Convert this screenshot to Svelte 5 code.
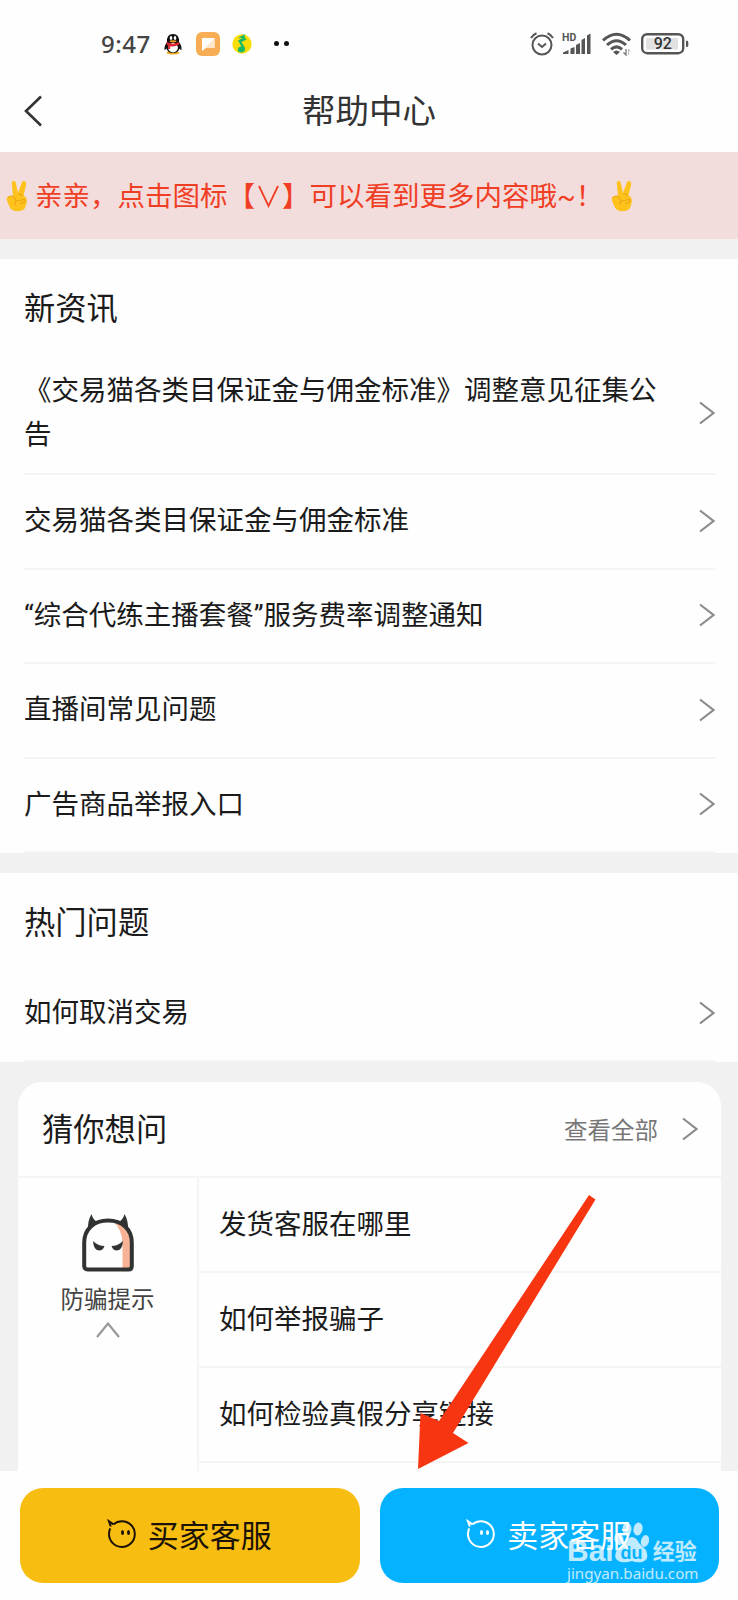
<script>
    const noticias = [
        "《交易猫各类目保证金与佣金标准》调整意见征集公告",
        "交易猫各类目保证金与佣金标准",
        "“综合代练主播套餐”服务费率调整通知",
        "直播间常见问题",
        "广告商品举报入口"
    ]
    const populares = ["如何取消交易"]
    const sugerencias = ["发货客服在哪里", "如何举报骗子", "如何检验真假分享链接", ""]
    const secciones = [
        { titulo: "新资讯", filas: noticias },
        { titulo: "热门问题", filas: populares }
    ]
</script>

{#snippet flecha()}
    <svg class="flecha" width="16" height="24" viewBox="0 0 16 24">
        <path d="M1 1.500L14.500 12L1 22.500" fill="none" stroke="#8b8b8b" stroke-width="2.200" />
    </svg>
{/snippet}

{#snippet mano()}
    <svg class="mano" width="23" height="32" viewBox="0 0 23 32">
        <path d="M7 16L5.800 3.500Q5.600.8 7.600.7Q9.400.7 9.800 3L12 13L15.800 2.500Q16.900.5 18.800 1.300Q20.700 2.200 20.200 4.400L17.500 15.500Q21 17 20.800 21Q20.500 31 12.500 31.300Q5 31.500 3.200 26L.8 20Q0 17.500 2 16.500Q4.500 15.200 7 16Z" fill="#fdc21b" />
        <path d="M2 18Q5 14.500 7.500 17L10 20.500M9 25Q8 20.500 13 20.500L18 19.500Q20 20 18.500 22Q16 23.500 14 23.500M12.500 13.500L17 15.500" fill="none" stroke="#eba51a" stroke-width="1.100" />
    </svg>
{/snippet}

{#snippet carita()}
    <svg width="29" height="30" viewBox="0 0 29 30">
        <path d="M6.500 5.300Q10 2.200 15 2.200A12.900 12.900 0 1 1 2 15Q2 12 3.200 9.300M3.800 7.500L1.900 2.200L6.500 5.300" fill="none" stroke="currentColor" stroke-width="2" />
        <ellipse cx="15.500" cy="13.500" rx="1.500" ry="2.500" fill="currentColor" />
        <ellipse cx="21.500" cy="13.500" rx="1.500" ry="2.500" fill="currentColor" />
    </svg>
{/snippet}

<main>
    <div class="estado">
        <span class="hora">9:47</span>
        <svg class="qq" width="18" height="22" viewBox="0 0 18 22">
            <ellipse cx="9" cy="19.800" rx="6.500" ry="1.800" fill="#efaa28" />
            <path d="M3 9Q2.500 1 9 1Q15.500 1 15 9Q18 13 17.500 16.500Q16.500 17.500 15.500 15.500Q14 20 9 20Q4 20 2.500 15.500Q1 17.500.5 16.500Q0 13 3 9Z" fill="#111" />
            <ellipse cx="9" cy="14.800" rx="4.900" ry="4.700" fill="#fff" />
            <path d="M3 9Q9 12.500 15 9L15.500 11.500Q9 14.500 6.500 13L6 16H4L4.300 12.500L2.500 11.500Z" fill="#df2530" />
            <ellipse cx="7" cy="5" rx="1.300" ry="1.900" fill="#fff" />
            <ellipse cx="11" cy="5" rx="1.300" ry="1.900" fill="#fff" />
            <ellipse cx="9" cy="8.300" rx="3.500" ry="1.100" fill="#eea020" />
        </svg>
        <svg class="mensaje" width="24" height="24" viewBox="0 0 24 24">
            <rect width="24" height="24" rx="6" fill="#f8ad55" />
            <path d="M6 6H18.500V16H10L6 19Z" fill="#fff" />
            <path d="M18.500 6V16H10L7 18Z" fill="#ffe8ca" />
        </svg>
        <svg class="musica" width="20" height="20" viewBox="0 0 20 20">
            <circle cx="10" cy="10" r="9.700" fill="#f9dc08" />
            <path d="M6 3.800L13 0Q11.500 3 14.500 5.500L9.500 8L12.800 13.500Q14 18 9.500 18.500Q5.500 18.500 5.800 15Q6.500 12 9.500 12.500L6 6.500L10.500 4Z" fill="#19b967" />
        </svg>
        <span class="puntos"><i></i><i></i></span>

        <svg class="alarma" width="24" height="24" viewBox="0 0 24 24">
            <g fill="none" stroke="#555" stroke-width="2">
                <circle cx="12" cy="13" r="9.500" />
                <path d="M1 6Q3 2.500 6.500 1.200M23 6Q21 2.500 17.500 1.200M8 11.500L12 15L16 11.500" />
            </g>
        </svg>
        <svg class="senal" width="30" height="24" viewBox="0 0 30 24">
            <text x="0" y="8.500" class="hd">HD</text>
            <path d="M1 20.500L6.500 18V22H1ZM8.500 16.500L12.500 15V22H8.500ZM14 13L18 11V22H14ZM19.500 8L23 6V22H19.500ZM25 3.500L28.500 1.500V22H25Z" fill="#555" />
        </svg>
        <svg class="wifi" width="29" height="24" viewBox="0 0 29 24">
            <g fill="none" stroke="#555" stroke-width="3">
                <path d="M1 8.500Q14.500-4 28 8.500M5 13Q14.500 4.500 24 13M9 17.300Q14.500 12.500 20 17.300" />
            </g>
            <path d="M11 20Q14.500 17 18 20L14.500 23Z" fill="#555" />
            <path d="M24 17V23L21.500 20.500" fill="none" stroke="#777" stroke-width="1.300" />
            <path d="M26.500 23V17L28.500 19.500" fill="none" stroke="#bbb" stroke-width="1" />
        </svg>
        <svg class="bateria" width="48" height="22" viewBox="0 0 48 22">
            <rect x="1.200" y="1.200" width="41" height="19" rx="5" fill="#fff" stroke="#555" stroke-width="2.400" />
            <rect x="5" y="5" width="32" height="11.500" rx="1.500" fill="#e2e2e2" />
            <path d="M45 7.500Q47.300 7.500 47.300 9V12.500Q47.300 14 45 14Z" fill="#555" />
            <text x="21.800" y="16.300" text-anchor="middle" class="carga">92</text>
        </svg>
    </div>

    <header>
        <svg width="20" height="32" viewBox="0 0 20 32">
            <path d="M17 1.500L2 16L17 30.500" fill="none" stroke="#333" stroke-width="2.600" />
        </svg>
        <h1>帮助中心</h1>
    </header>

    <div class="aviso">
        {@render mano()}
        <span>亲亲，点击图标【<svg class="ve" width="27" height="24" viewBox="0 0 27 24"><path d="M4 2L13.500 22L23 2" fill="none" stroke="#f03e25" stroke-width="1.800" /></svg>】可以看到更多内容哦~！</span>
        {@render mano()}
    </div>

    <div class="contenido">
        {#each secciones as seccion}
            <section>
                <h2>{seccion.titulo}</h2>
                <ul>
                    {#each seccion.filas as fila}
                        <li>
                            <span>{fila}</span>
                            {@render flecha()}
                        </li>
                    {/each}
                </ul>
            </section>
        {/each}

        <div class="tarjeta">
            <div class="cabecera">
                <h2>猜你想问</h2>
                <a href="#todo">查看全部 {@render flecha()}</a>
            </div>
            <div class="cuerpo">
                <div class="categoria">
                    <svg width="52" height="59" viewBox="0 0 52 59">
                        <path d="M31 7Q48 12 48 29V54H40.500V30Q40.500 16 31 7Z" fill="#f8b396" />
                        <path d="M2.200 52V29C2.200 15 12 6.500 26 6.500S49.800 15 49.800 29V52Q49.800 55.500 46.300 55.500H5.700Q2.200 55.500 2.200 52Z" fill="none" stroke="#303332" stroke-width="4" />
                        <path d="M6 16Q5.500 7 9.500 0Q11 6 15.500 8ZM46 16Q46.500 7 42.500 0Q41 6 36.500 8Z" fill="#303332" />
                        <path d="M11 27Q16 32 22.500 32Q21 36.500 17 36.500Q11.500 36 11 27ZM41 27Q36 32 29.500 32Q31 36.500 35 36.500Q40.500 36 41 27Z" fill="#303332" />
                    </svg>
                    <span>防骗提示</span>
                    <svg width="24" height="16" viewBox="0 0 24 16">
                        <path d="M1 15L12 1.500L23 15" fill="none" stroke="#999" stroke-width="2.200" />
                    </svg>
                </div>
                <ul class="preguntas">
                    {#each sugerencias as pregunta}
                        <li>{pregunta}</li>
                    {/each}
                </ul>
            </div>
        </div>
    </div>

    <footer>
        <button class="comprador">{@render carita()}买家客服</button>
        <button class="vendedor">{@render carita()}卖家客服</button>
    </footer>

    <!-- indicador rojo sobre la lista -->
    <svg class="indicador" width="180" height="276" viewBox="0 0 180 276">
        <path d="M171 0L177.500 4.500L35 238L50.500 248L0 274L2.500 218L21 226Z" fill="#f73611" />
    </svg>

    <div class="marca">
        <div class="logo">
            <b>Bai</b>
            <svg width="35" height="42" viewBox="0 0 35 42">
                <g fill="#fff">
                    <ellipse cx="5" cy="18" rx="4.500" ry="6" transform="rotate(-15 5 18)" />
                    <ellipse cx="13" cy="8" rx="4.500" ry="6.500" />
                    <ellipse cx="24" cy="8" rx="4.500" ry="6.500" transform="rotate(12 24 8)" />
                    <ellipse cx="31" cy="20" rx="4" ry="6" transform="rotate(15 31 20)" />
                    <path d="M18 16Q22 16 25 22L32 29Q36 39 28 41Q23 42 18 40Q12 42 7 41Q-2 38 3 29L11 22Q14 16 18 16Z" />
                </g>
                <text x="17.500" y="38" text-anchor="middle" class="du">du</text>
            </svg>
            <b class="zh">经验</b>
        </div>
        <span class="web">jingyan.baidu.com</span>
    </div>
</main>

<style>
    :global(body) {
        margin: 0;
    }

    main {
        position: relative;
        display: flex;
        flex-direction: column;
        width: 738px;
        height: 1600px;
        overflow: hidden;
        background: #fefefe;
        color: #1b1b1b;
        font-family: Roboto, "Noto Sans CJK SC", sans-serif;
    }

    svg {
        display: block;
        flex: none;
    }

    h1, h2, ul {
        margin: 0;
        padding: 0;
        font-weight: 400;
        list-style: none;
    }

    .estado {
        display: flex;
        align-items: center;
        box-sizing: border-box;
        height: 74px;
        padding: 13px 49px 0 101px;
    }

    .hora {
        width: 63px;
        font: 500 24px "Noto Sans", sans-serif;
        letter-spacing: .5px;
        color: #444;
    }

    .qq { margin-right: 14px; }
    .mensaje { margin-right: 12px; }
    .musica { margin-right: 22px; }

    .puntos {
        display: flex;
        gap: 5px;
        margin-right: auto;
    }

    .puntos i {
        width: 5px;
        height: 5px;
        border-radius: 50%;
        background: #111;
    }

    .alarma { margin-right: 8px; }
    .senal { margin-right: 10px; }
    .wifi { margin-right: 10px; }

    .hd {
        font: 700 10.500px Roboto, sans-serif;
        fill: #555;
    }

    .carga {
        font: 500 16px Roboto, sans-serif;
        fill: #333;
    }

    header {
        display: flex;
        align-items: center;
        box-sizing: border-box;
        height: 78px;
        padding: 0 24px 4px;
    }

    h1 {
        flex: 1;
        margin-right: 20px;
        padding-top: 2px;
        text-align: center;
        font-size: 33.500px;
        line-height: 48px;
        color: #333;
    }

    .aviso {
        display: flex;
        align-items: center;
        height: 87px;
        padding-left: 6px;
        background: #f3dddc;
        color: #f03e25;
        font-size: 27.500px;
        white-space: nowrap;
    }

    .aviso span {
        margin: 0 8px 0 6px;
        padding-bottom: 3px;
    }

    .ve {
        display: inline-block;
        vertical-align: -2px;
    }

    .contenido {
        flex: 1;
        min-height: 0;
        overflow: hidden;
        background: #f1f1f1;
    }

    section {
        margin-top: 20px;
        padding: 0 23px 0 24px;
        background: #fefefe;
    }

    h2 {
        font-size: 31.300px;
        line-height: 46px;
    }

    section h2 {
        padding: 28px 0 20px;
    }

    section li {
        display: flex;
        align-items: center;
        justify-content: space-between;
        box-sizing: border-box;
        min-height: 94.500px;
        padding: 16px 0 17px;
        border-bottom: 2px solid #f5f5f5;
        font-size: 27.500px;
        line-height: 43.500px;
    }

    section li span {
        width: 640px;
    }

    .tarjeta {
        margin: 20px 17px 0 18px;
        border-radius: 24px 24px 0 0;
        background: #fefefe;
    }

    .cabecera {
        display: flex;
        align-items: center;
        justify-content: space-between;
        box-sizing: border-box;
        height: 96px;
        padding: 0 23px 0 24px;
        border-bottom: 2px solid #f5f5f5;
    }

    .cabecera h2 {
        padding-top: 4px;
    }

    .cabecera a {
        display: flex;
        align-items: center;
        gap: 24px;
        color: #777;
        font-size: 23.500px;
        text-decoration: none;
    }

    .cuerpo {
        display: flex;
    }

    .categoria {
        display: flex;
        flex-direction: column;
        align-items: center;
        box-sizing: border-box;
        width: 181px;
        padding-top: 36px;
        border-right: 2px solid #f5f5f5;
        font-size: 23.500px;
        line-height: 34px;
        color: #444;
    }

    .categoria span {
        margin: 10px 0 5px;
    }

    .preguntas {
        flex: 1;
    }

    .preguntas li {
        box-sizing: border-box;
        height: 95.200px;
        padding-left: 20px;
        border-bottom: 2px solid #f5f5f5;
        font-size: 27.500px;
        line-height: 94px;
    }

    footer {
        display: flex;
        gap: 20px;
        box-sizing: border-box;
        height: 129px;
        padding: 17px 19px 17px 20px;
        background: #fefefe;
    }

    button {
        display: flex;
        flex: 1;
        align-items: center;
        justify-content: center;
        gap: 12px;
        padding: 0 1px 4px 0;
        border: none;
        border-radius: 23px;
        font-family: inherit;
        font-size: 31px;
    }

    .comprador {
        background: #f8bd11;
        color: #1b1308;
    }

    .vendedor {
        background: #04b2ff;
        color: #fff;
    }

    .indicador {
        position: absolute;
        left: 418px;
        top: 1195px;
    }

    .marca {
        position: absolute;
        left: 567px;
        top: 1521px;
        color: #fff;
        opacity: .75;
    }

    .logo {
        display: flex;
        align-items: flex-end;
        height: 42px;
    }

    .logo b {
        font: 700 30px/25px "Liberation Sans", sans-serif;
    }

    .logo .zh {
        margin-left: 4px;
        font: 700 22px/28px "Noto Sans CJK SC", sans-serif;
    }

    .du {
        font: 700 18px "Liberation Sans", sans-serif;
        fill: #04b2ff;
    }

    .web {
        display: block;
        font: 15.200px/21px "Noto Sans", sans-serif;
    }
</style>
